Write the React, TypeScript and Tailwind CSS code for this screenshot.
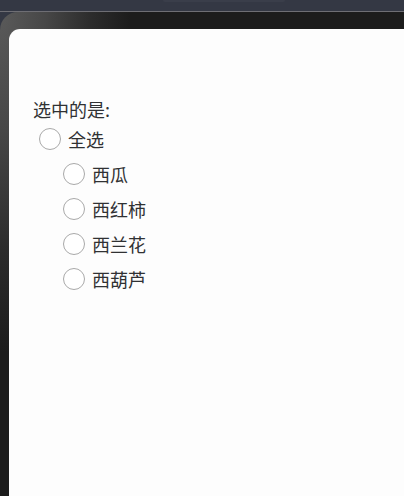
const items = ["西瓜", "西红柿", "西兰花", "西葫芦"];

function Radio({ label }: { label: string }) {
  return (
    <div className="flex h-[35px] items-center gap-[7px]">
      <span className="h-[22px] w-[22px] shrink-0 rounded-full border border-[#a9a9a9] bg-white" />
      <span className="leading-[24px]">{label}</span>
    </div>
  );
}

export default function App() {
  return (
    <div
      className="flex h-[496px] w-[404px] flex-col overflow-hidden bg-[#343844]"
      style={{ fontFamily: '"Noto Sans CJK SC", "Noto Sans", sans-serif' }}
    >
      {/* status strip */}
      <div className="relative h-[11px] shrink-0 bg-[#343844]">
        <div className="absolute left-[163px] top-0 h-[2px] w-[122px] rounded-b bg-[#3a3e4a]" />
      </div>
      <div className="h-px shrink-0 bg-[#6e6e74]" />

      {/* device frame */}
      <div className="flex flex-1 flex-col rounded-tl-[18px] bg-[#1c1c1c] bg-[radial-gradient(ellipse_130px_340px_at_0_0,#5a5a5a_0%,#474747_35%,#2c2c2c_70%,#1c1c1c_100%)] pl-[9px] pt-[17px]">
        <div className="flex-1 rounded-tl-[11px] bg-[#fdfdfd] pl-[24px] pt-[68px] text-[18px] text-[#303133]">
          <div className="leading-[24px]">选中的是:</div>
          <div className="pl-[6px]">
            <Radio label="全选" />
            <div className="pl-[24px]">
              {items.map((it) => (
                <Radio key={it} label={it} />
              ))}
            </div>
          </div>
        </div>
      </div>
    </div>
  );
}
